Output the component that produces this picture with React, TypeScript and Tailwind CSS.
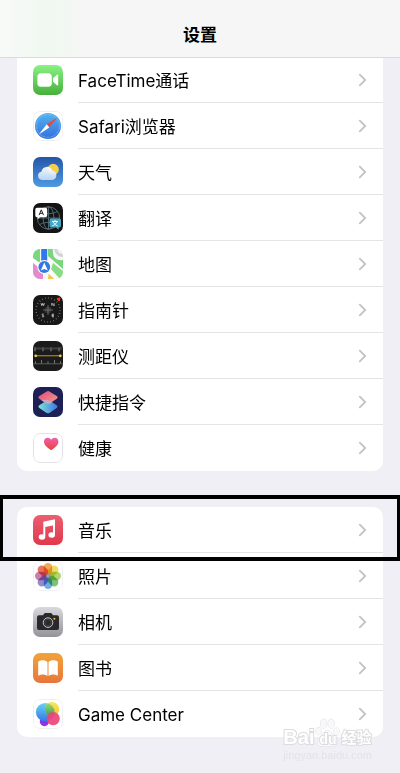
import type { ReactNode } from 'react';

type Item = { label: string; icon: ReactNode; highlighted?: boolean };

function Tile({ children }: { children: ReactNode }) {
  return (
    <svg viewBox="0 0 30 30" className="size-[30px] shrink-0 overflow-hidden rounded-[7px]" aria-hidden="true">
      {children}
    </svg>
  );
}

function Outline({ color = '#f0f0f2' }: { color?: string }) {
  return <rect x="0.5" y="0.5" width="29" height="29" rx="6.5" fill="none" stroke={color} />;
}

function FaceTimeIcon() {
  return (
    <Tile>
      <linearGradient id="facetime" x2="0" y2="1">
        <stop stopColor="#8af184" />
        <stop offset="1" stopColor="#47b03b" />
      </linearGradient>
      <rect width="30" height="30" fill="url(#facetime)" />
      <rect x="4.4" y="8.2" width="14.4" height="13.6" rx="3.6" fill="#fff" />
      <path d="M20 13.2l3.7-3.3c.7-.6 1.5-.3 1.5.6v9c0 .9-.8 1.2-1.5.6L20 16.8z" fill="#fff" />
    </Tile>
  );
}

function SafariIcon() {
  return (
    <Tile>
      <linearGradient id="safari" x2="0" y2="1">
        <stop stopColor="#51b4f0" />
        <stop offset="1" stopColor="#3470dd" />
      </linearGradient>
      <rect width="30" height="30" fill="#fff" />
      <Outline />
      <circle cx="15" cy="15" r="13" fill="url(#safari)" />
      <circle cx="15" cy="15" r="11.4" fill="none" stroke="#a5d2f5" strokeWidth="1" strokeDasharray=".5 .8" />
      <path d="M24.2 6.6L13.7 13.2 16.3 16.4z" fill="#e9483f" />
      <path d="M5.8 23.4L13.7 13.2 16.3 16.4z" fill="#fff" />
    </Tile>
  );
}

function WeatherIcon() {
  return (
    <Tile>
      <linearGradient id="sky" x2="0" y2="1">
        <stop stopColor="#2455a8" />
        <stop offset="1" stopColor="#4f9ae2" />
      </linearGradient>
      <linearGradient id="cloud" x2="0" y2="1">
        <stop stopColor="#fff" />
        <stop offset="1" stopColor="#bcd9f5" />
      </linearGradient>
      <rect width="30" height="30" fill="url(#sky)" />
      <circle cx="20.2" cy="12.4" r="5.6" fill="#f6cf48" />
      <path d="M9 23a4.2 4.2 0 0 1-.6-8.3 5.7 5.7 0 0 1 10.9-1.3 4.9 4.9 0 0 1 .3 9.6z" fill="url(#cloud)" opacity=".95" />
    </Tile>
  );
}

function TranslateIcon() {
  return (
    <Tile>
      <rect width="30" height="30" fill="#141415" />
      <g fill="none" stroke="#56707a" strokeWidth=".9">
        <circle cx="15.5" cy="15" r="11.2" />
        <ellipse cx="15.5" cy="15" rx="5.4" ry="11.2" />
        <path d="M15.5 3.8v22.4M4.3 15h22.4M6.5 8.4c5 3 13 3 18 0M6.5 21.6c5-3 13-3 18 0" />
      </g>
      <path d="M4 4.8h8.5a1.7 1.7 0 0 1 1.7 1.7v6a1.7 1.7 0 0 1-1.7 1.7H7l-2.3 2v-2H4a1.7 1.7 0 0 1-1.7-1.7v-6A1.7 1.7 0 0 1 4 4.8z" fill="#fff" />
      <path d="M6.1 12.1L8.3 6.8l2.2 5.3M6.9 10.3h2.8" fill="none" stroke="#222" strokeWidth="1" />
      <path d="M18.2 15.4h8.1a1.7 1.7 0 0 1 1.7 1.7v5.7a1.7 1.7 0 0 1-1.7 1.7h-.7v2.2l-2.5-2.2h-4.9a1.7 1.7 0 0 1-1.7-1.7v-5.7a1.7 1.7 0 0 1 1.7-1.7z" fill="#45a7c3" />
      <path d="M19 18.5h6M22 17v1.5M20.2 18.6c.6 2 2 3.5 4.5 4.3M23.8 18.6c-.6 2-2 3.5-4.5 4.3" fill="none" stroke="#fff" strokeWidth=".9" />
    </Tile>
  );
}

function MapsIcon() {
  return (
    <Tile>
      <rect width="30" height="30" fill="#f8f8f8" />
      <path d="M0 0h7v14L0 9z" fill="#7bd77b" />
      <path d="M15 0h5c-1 8 3 12 10 11v9L15 7z" fill="#78d67c" />
      <path d="M20 14l10 8v8h-3L18 20z" fill="#8adb86" />
      <path d="M0 14l10 8v8H0z" fill="#e38bcc" />
      <path d="M16 22l8 8H15z" fill="#f6c845" />
      <path d="M21 0a9 9 0 0 0 9 8V0z" fill="#d2d3d7" />
      <path d="M24 0a6 6 0 0 0 6 5V0z" fill="#f3f3f4" />
      <path d="M0 11L17 24l6 6" fill="none" stroke="#fff" strokeWidth="2.5" />
      <path d="M8.2 0h6v16h-6z" fill="#3378e8" />
      <circle cx="11.3" cy="18" r="7" fill="#fff" />
      <circle cx="11.3" cy="18" r="5.9" fill="#3478e5" />
      <path d="M11.3 13.5l3.5 8-3.5-1.6-3.5 1.6z" fill="#fff" />
    </Tile>
  );
}

function CompassIcon() {
  return (
    <Tile>
      <rect width="30" height="30" fill="#181819" />
      <circle cx="15" cy="15" r="12" fill="none" stroke="#888" strokeWidth="1.6" strokeDasharray=".6 2.54" />
      <path d="M15 10v10M10 15h10" stroke="#777" strokeWidth=".8" />
      <circle cx="15" cy="15" r="3.3" fill="#777" opacity=".3" />
      <path d="M24 3.8l3-.9-.8 3.2z" fill="#f43e30" stroke="#f43e30" />
      <g fill="none" stroke="#ddd" strokeWidth=".8">
        <path d="M8 8.2l.8 2.4.9-2.2.9 2.2.8-2.4M18.8 10.8V8.2l2.3 2.6V8.2M10.8 19.3c-.8-.6-2-.2-1.8.6.2.7 1.9.4 1.9 1.3 0 .8-1.3.9-2 .3M21 19.2h-1.8v2.6H21M19.2 20.5h1.6" />
      </g>
    </Tile>
  );
}

function MeasureIcon() {
  return (
    <Tile>
      <rect width="30" height="30" fill="#1b1b1c" />
      <path d="M2 6.3v4M10 6.3v4M18 6.3v4M26 6.3v4" stroke="#aaa" strokeWidth=".8" />
      <path d="M4 6.3v2.4M6 6.3v2.4M8 6.3v2.4M12 6.3v2.4M14 6.3v2.4M16 6.3v2.4M20 6.3v2.4M22 6.3v2.4M24 6.3v2.4M28 6.3v2.4" stroke="#888" strokeWidth=".6" />
      <path d="M2.5 14.8h25" stroke="#bf9a2b" strokeWidth="1" />
      <circle cx="2.7" cy="14.8" r="1.4" fill="#f6d13e" />
      <circle cx="27.3" cy="14.8" r="1.4" fill="#f6d13e" />
      <path d="M0 22.8h30" stroke="#777" strokeWidth=".7" />
      <path d="M2.5 22.5v-2.3M8.5 22.5v-3.6M15 22.5v-2.3M21.5 22.5v-3.6M27.5 22.5v-2.3" stroke="#999" strokeWidth=".7" />
    </Tile>
  );
}

function ShortcutsIcon() {
  return (
    <Tile>
      <linearGradient id="shortTop" x2="1" y2="1">
        <stop stopColor="#e2477b" />
        <stop offset="1" stopColor="#f0a08a" />
      </linearGradient>
      <linearGradient id="shortBottom" x2="1" y2="0">
        <stop stopColor="#7ae5d0" />
        <stop offset="1" stopColor="#3d74e8" />
      </linearGradient>
      <rect width="30" height="30" fill="#1c2055" />
      <path d="M13.7 13.6l-7.4 4.6a1.6 1.6 0 0 0 0 2.8l7.4 4.9a2.6 2.6 0 0 0 2.7 0l7.3-4.9a1.6 1.6 0 0 0 0-2.8l-7.3-4.6a2.6 2.6 0 0 0-2.7 0z" fill="url(#shortBottom)" />
      <path d="M13.7 4.4L6.3 9a1.6 1.6 0 0 0 0 2.8l7.4 4.9a2.6 2.6 0 0 0 2.7 0l7.3-4.9a1.6 1.6 0 0 0 0-2.8l-7.3-4.6a2.6 2.6 0 0 0-2.7 0z" fill="url(#shortTop)" />
      <path d="M15 12.9l-6.8.2 5.5 3.6a2.6 2.6 0 0 0 2.7 0l2.6-1.6-2.6-1.6z" fill="#c4a6c4" />
    </Tile>
  );
}

function HealthIcon() {
  return (
    <Tile>
      <linearGradient id="heart" x2="0" y2="1">
        <stop stopColor="#ec62b0" />
        <stop offset="1" stopColor="#ed4032" />
      </linearGradient>
      <rect width="30" height="30" fill="#fff" />
      <Outline color="#e2e2e4" />
      <path d="M18.2 17.2c-3.8-2.7-7.2-5.2-7.2-8.5 0-2.3 1.6-3.900 3.700-3.900 1.500 0 2.800.8 3.500 2 .7-1.200 2-2 3.500-2 2.100 0 3.700 1.600 3.700 3.900 0 3.300-3.400 5.800-7.200 8.500z" fill="url(#heart)" />
    </Tile>
  );
}

function MusicIcon() {
  return (
    <Tile>
      <linearGradient id="music" x2="0" y2="1">
        <stop stopColor="#ea6071" />
        <stop offset="1" stopColor="#e2374a" />
      </linearGradient>
      <rect width="30" height="30" fill="url(#music)" />
      <path d="M10.3 6.8L22 4.2V10l-9.7 2.1v9.200h-2z" fill="#fff" />
      <path d="M20 8h2v12h-2z" fill="#fff" />
      <ellipse cx="9" cy="22" rx="3.3" ry="2.7" fill="#fff" />
      <ellipse cx="18.7" cy="20" rx="3.3" ry="2.7" fill="#fff" />
    </Tile>
  );
}

const petals = ['#f19a37', '#ead64a', '#a4cf55', '#62b866', '#5a9ce0', '#8176c5', '#c2669f', '#e65a48'];

function PhotosIcon() {
  return (
    <Tile>
      <rect width="30" height="30" fill="#fff" />
      <Outline />
      {petals.map((color, i) => (
        <rect
          key={color}
          x="10.8"
          y="2"
          width="8.4"
          height="11.6"
          rx="4.2"
          fill={color}
          opacity=".85"
          transform={`rotate(${i * 45} 15 15)`}
          className="mix-blend-multiply"
        />
      ))}
      <circle cx="15" cy="15" r="2.2" fill="#5d5f9c" opacity=".6" />
    </Tile>
  );
}

function CameraIcon() {
  return (
    <Tile>
      <linearGradient id="camera" x2="0" y2="1">
        <stop stopColor="#d9d9dd" />
        <stop offset="1" stopColor="#939398" />
      </linearGradient>
      <rect width="30" height="30" fill="url(#camera)" />
      <path d="M6 8.3h4l1.2-1.7c.3-.4.7-.6 1.2-.6h5.2c.5 0 .9.2 1.2.6L20 8.3h4a2 2 0 0 1 2 2V21a2 2 0 0 1-2 2H6a2 2 0 0 1-2-2V10.300a2 2 0 0 1 2-2z" fill="#29292b" />
      <circle cx="15" cy="15.6" r="4.8" fill="#29292b" stroke="#ccccd0" strokeWidth="1" />
      <circle cx="15" cy="15.6" r="3.100" fill="none" stroke="#555" strokeWidth=".6" />
      <circle cx="21.4" cy="11.8" r="1" fill="#f4c638" />
    </Tile>
  );
}

function BooksIcon() {
  return (
    <Tile>
      <linearGradient id="books" x2="0" y2="1">
        <stop stopColor="#f1a43a" />
        <stop offset="1" stopColor="#e8763a" />
      </linearGradient>
      <rect width="30" height="30" fill="url(#books)" />
      <path d="M14.5 9.2C13.2 7.8 11.6 7.2 9.7 7.2S6 7.9 5.2 8.7v14c3-1.7 6.600-1.600 9.300.3zM15.500 9.200c1.300-1.400 2.900-2 4.800-2s3.700.7 4.500 1.500v14c-3-1.700-6.600-1.600-9.300.3z" fill="#fff" />
    </Tile>
  );
}

function GameCenterIcon() {
  return (
    <Tile>
      <linearGradient id="gcBlue" x2="0" y2="1">
        <stop stopColor="#68d3f8" />
        <stop offset="1" stopColor="#3476e6" />
      </linearGradient>
      <linearGradient id="gcYellow" x2="0" y2="1">
        <stop stopColor="#f8e85a" />
        <stop offset="1" stopColor="#f2c43a" />
      </linearGradient>
      <linearGradient id="gcGreen" x2="0" y2="1">
        <stop stopColor="#a9dc74" />
        <stop offset="1" stopColor="#38a052" />
      </linearGradient>
      <clipPath id="gcClip">
        <circle cx="12.3" cy="13.2" r="9.3" />
      </clipPath>
      <rect width="30" height="30" fill="#fff" />
      <Outline />
      <circle cx="11.4" cy="22.6" r="4.6" fill="#8b33ea" />
      <circle cx="12.3" cy="13.2" r="9.3" fill="url(#gcBlue)" />
      <circle cx="19" cy="10.2" r="7.2" fill="url(#gcYellow)" />
      <circle cx="19" cy="10.2" r="7.2" fill="url(#gcGreen)" clipPath="url(#gcClip)" />
      <circle cx="20.2" cy="19.6" r="6.6" fill="#ee4478" opacity=".92" />
    </Tile>
  );
}

const groups: Item[][] = [
  [
    { label: 'FaceTime通话', icon: <FaceTimeIcon /> },
    { label: 'Safari浏览器', icon: <SafariIcon /> },
    { label: '天气', icon: <WeatherIcon /> },
    { label: '翻译', icon: <TranslateIcon /> },
    { label: '地图', icon: <MapsIcon /> },
    { label: '指南针', icon: <CompassIcon /> },
    { label: '测距仪', icon: <MeasureIcon /> },
    { label: '快捷指令', icon: <ShortcutsIcon /> },
    { label: '健康', icon: <HealthIcon /> },
  ],
  [
    { label: '音乐', icon: <MusicIcon />, highlighted: true },
    { label: '照片', icon: <PhotosIcon /> },
    { label: '相机', icon: <CameraIcon /> },
    { label: '图书', icon: <BooksIcon /> },
    { label: 'Game Center', icon: <GameCenterIcon /> },
  ],
];

function Row({ item, last }: { item: Item; last: boolean }) {
  return (
    <li className="relative">
      <a href="#" className="flex h-[46px] items-center gap-[15px] pl-4">
        {item.icon}
        <span className={`flex h-full flex-1 items-center justify-between border-b pr-4 ${last ? 'border-transparent' : 'border-[#e4e4e6]'}`}>
          <span className="pt-0.5">{item.label}</span>
          <svg viewBox="0 0 9 14" className="h-[14px] w-[9px]" fill="none" stroke="#c3c3c6" strokeWidth="1.8" aria-hidden="true">
            <path d="M1.3 1.2L7.200 7l-5.900 5.800" />
          </svg>
        </span>
      </a>
      {item.highlighted && (
        <div className="pointer-events-none absolute -inset-x-[17px] -top-3 -bottom-2 z-10 border-x-[3px] border-y-4 border-black" />
      )}
    </li>
  );
}

function Watermark() {
  return (
    <div className="pointer-events-none absolute right-7 bottom-[11px] font-['Liberation_Sans','Noto_Sans_CJK_SC',sans-serif] whitespace-nowrap">
      <div className="flex items-end font-bold text-white [-webkit-text-stroke:2px_#dcdce0] [paint-order:stroke_fill]">
        <span className="text-[20px] leading-[22px]">Bai</span>
        <span className="relative flex h-[30px] w-[27px] items-end justify-center">
          <svg viewBox="0 0 26 32" className="absolute inset-0 size-full" fill="#f8f8fa" stroke="#dcdce0" aria-hidden="true">
            <ellipse cx="3.5" cy="14" rx="3" ry="4" />
            <ellipse cx="9" cy="6" rx="3.3" ry="4.8" />
            <ellipse cx="17" cy="6" rx="3.3" ry="4.8" />
            <ellipse cx="22.5" cy="14.500" rx="3" ry="4" />
            <path d="M13 13c3 0 4 3 6.5 6s5 4.500 4 8-4 3.500-10.500 3.500S3.500 30.500 2.500 27s1.500-5 4-8S10 13 13 13z" />
          </svg>
          <span className="relative text-[14px] leading-[18px]">du</span>
        </span>
        <span className="text-[15px] leading-5">经验</span>
      </div>
      <div className="text-[11px] leading-[14px] text-[#e3e3e7]">jingyan.baidu.com</div>
    </div>
  );
}

export default function App() {
  return (
    <div className="relative min-h-screen overflow-x-hidden bg-[#f0eff5] pb-9 font-[Inter,'Noto_Sans_CJK_SC',sans-serif] text-[17px] leading-6 text-black">
      <header className="sticky top-0 z-20 flex h-[58px] items-end justify-center border-b border-[#dadadc] bg-[#f6f6f6] bg-linear-to-r from-[#f8faf8] via-[#f0f8f0] via-12% to-[#f6f6f6] to-22% pb-[10px]">
        <h1 className="font-bold">设置</h1>
      </header>
      <main className="-mt-px flex flex-col gap-9 px-[17px]">
        {groups.map((items, g) => (
          <ul key={g} className={`bg-white ${g === 0 ? 'rounded-b-[10px]' : 'rounded-[10px]'}`}>
            {items.map((item, i) => (
              <Row key={item.label} item={item} last={i === items.length - 1} />
            ))}
          </ul>
        ))}
      </main>
      <Watermark />
    </div>
  );
}
